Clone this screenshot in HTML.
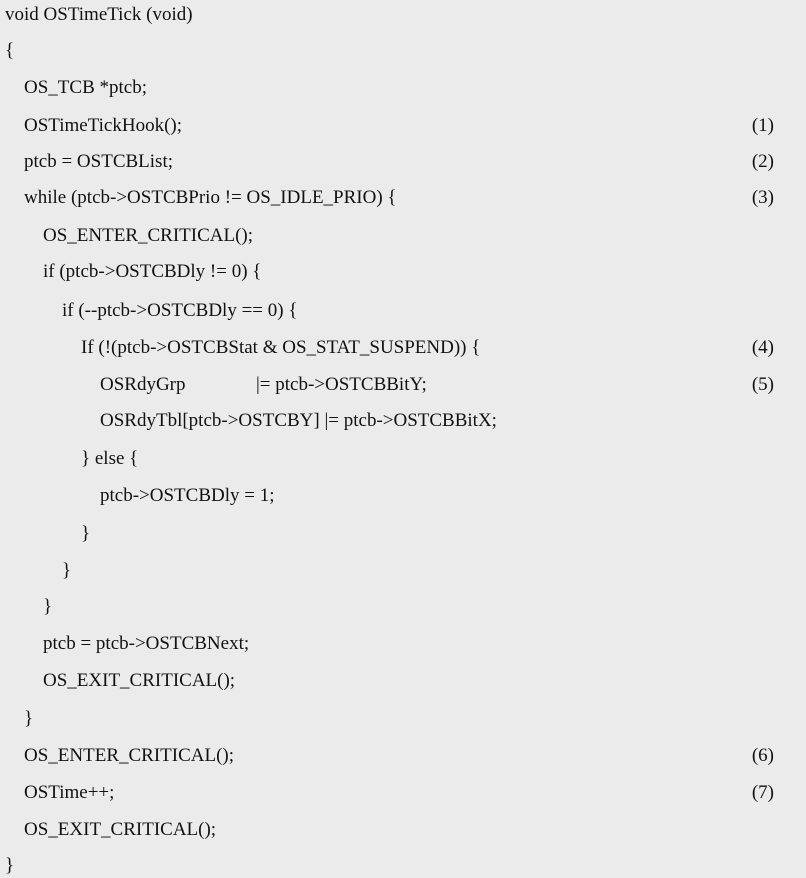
<!DOCTYPE html>
<html><head><meta charset="utf-8"><style>
html,body{margin:0;padding:0;background:#ebebeb;}
body{width:806px;height:878px;position:relative;overflow:hidden;font-family:"Liberation Serif",serif;font-size:19px;color:#111;}
.l{position:absolute;line-height:20px;white-space:pre;}
.n{position:absolute;right:32px;line-height:20px;}
</style></head><body>
<div class="l" style="left:5px;top:5px">void OSTimeTick (void)</div>
<div class="l" style="left:5px;top:41px">{</div>
<div class="l" style="left:24px;top:78px">OS_TCB *ptcb;</div>
<div class="l" style="left:24px;top:116px">OSTimeTickHook();</div><div class="n" style="top:116px">(1)</div>
<div class="l" style="left:24px;top:152px">ptcb = OSTCBList;</div><div class="n" style="top:152px">(2)</div>
<div class="l" style="left:24px;top:188px">while (ptcb-&gt;OSTCBPrio != OS_IDLE_PRIO) {</div><div class="n" style="top:188px">(3)</div>
<div class="l" style="left:43px;top:226px">OS_ENTER_CRITICAL();</div>
<div class="l" style="left:43px;top:262px">if (ptcb-&gt;OSTCBDly != 0) {</div>
<div class="l" style="left:62px;top:301px">if (--ptcb-&gt;OSTCBDly == 0) {</div>
<div class="l" style="left:81px;top:338px">If (!(ptcb-&gt;OSTCBStat &amp; OS_STAT_SUSPEND)) {</div><div class="n" style="top:338px">(4)</div>
<div class="l" style="left:100px;top:375px">OSRdyGrp</div><div class="l" style="left:256px;top:375px">|= ptcb-&gt;OSTCBBitY;</div><div class="n" style="top:375px">(5)</div>
<div class="l" style="left:100px;top:411px">OSRdyTbl[ptcb-&gt;OSTCBY] |= ptcb-&gt;OSTCBBitX;</div>
<div class="l" style="left:81px;top:449px">} else {</div>
<div class="l" style="left:100px;top:486px">ptcb-&gt;OSTCBDly = 1;</div>
<div class="l" style="left:81px;top:524px">}</div>
<div class="l" style="left:62px;top:561px">}</div>
<div class="l" style="left:43px;top:597px">}</div>
<div class="l" style="left:43px;top:634px">ptcb = ptcb-&gt;OSTCBNext;</div>
<div class="l" style="left:43px;top:671px">OS_EXIT_CRITICAL();</div>
<div class="l" style="left:24px;top:709px">}</div>
<div class="l" style="left:24px;top:746px">OS_ENTER_CRITICAL();</div><div class="n" style="top:746px">(6)</div>
<div class="l" style="left:24px;top:783px">OSTime++;</div><div class="n" style="top:783px">(7)</div>
<div class="l" style="left:24px;top:820px">OS_EXIT_CRITICAL();</div>
<div class="l" style="left:5px;top:856px">}</div>
</body></html>
